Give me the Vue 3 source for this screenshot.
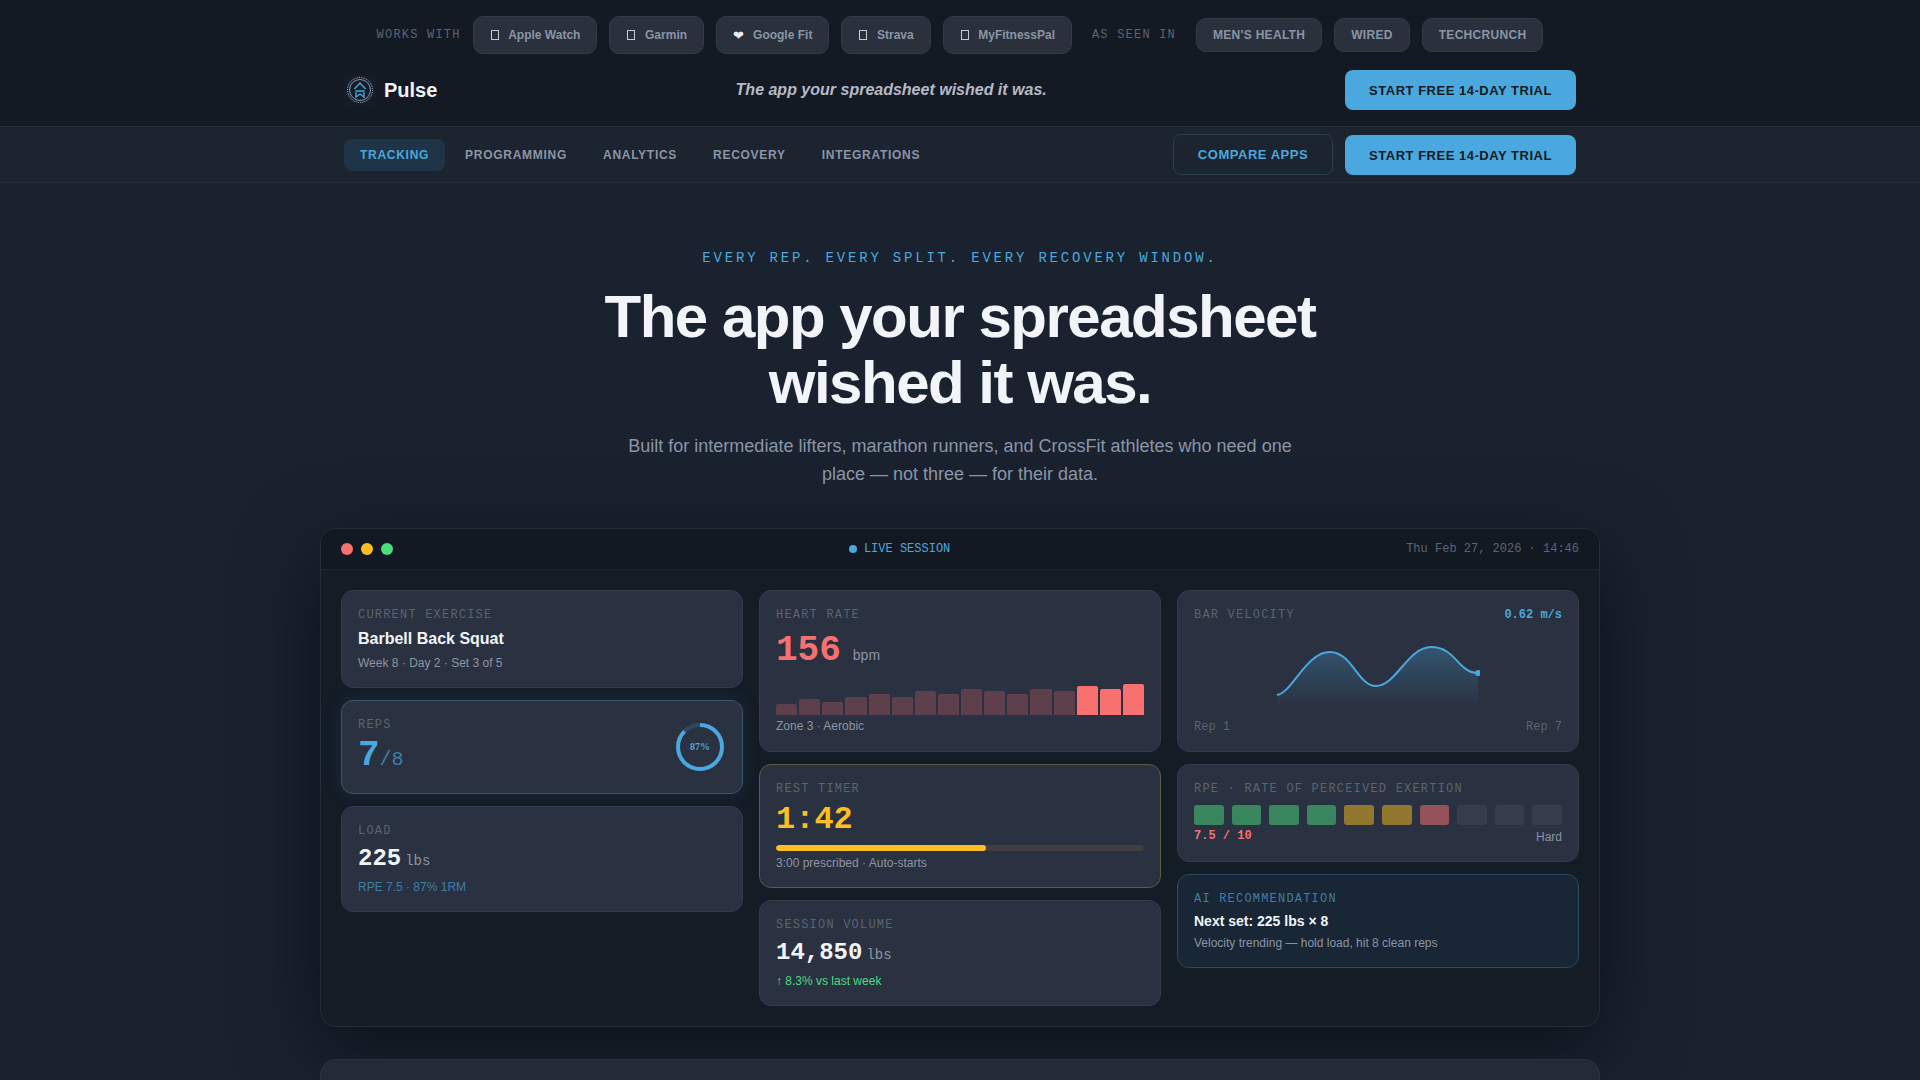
<script setup>
const chips = [
  { t: 'Apple Watch' },
  { t: 'Garmin' },
  { t: 'Google Fit', heart: true },
  { t: 'Strava' },
  { t: 'MyFitnessPal' }
]
const press = ["MEN'S HEALTH", 'WIRED', 'TECHCRUNCH']
const nav = ['TRACKING', 'PROGRAMMING', 'ANALYTICS', 'RECOVERY', 'INTEGRATIONS']
const hr = [11, 16, 13, 18, 21, 18, 24, 21, 26, 24, 21, 26, 24, 29, 26, 31]
const rpe = ['g', 'g', 'g', 'g', 'y', 'y', 'r', 'e', 'e', 'e']
</script>

<template>
  <div class="page">
    <header class="top">
      <div class="wrap">
        <div class="strip">
          <span class="strip-label">WORKS WITH</span>
          <span v-for="c in chips" :key="c.t" class="chip">
            <span v-if="c.heart" class="chip-heart">❤</span>
            <span v-else class="chip-box"><i></i></span>
            {{ c.t }}
          </span>
          <span class="strip-label seen">AS SEEN IN</span>
          <span v-for="p in press" :key="p" class="chip press">{{ p }}</span>
        </div>
        <div class="brandrow">
          <div class="brand">
            <span class="logo">
              <svg width="32" height="32" viewBox="0 0 32 32" fill="none">
                <circle cx="16" cy="16" r="12.500" stroke="#d5dae1" stroke-width="1" stroke-dasharray="1 1.300" />
                <circle cx="16" cy="16" r="10.500" stroke="#7f9db3" stroke-width="1" />
                <path d="M10.500 15 16 9 21.500 15M11.500 17h9M12 18v5l4-3 4 3v-5" stroke="#4aa8de" stroke-width="1.400" />
              </svg>
            </span>
            <span class="brand-name">Pulse</span>
          </div>
          <div class="tagline">The app your spreadsheet wished it was.</div>
          <button class="cta">START FREE 14-DAY TRIAL</button>
        </div>
      </div>
    </header>

    <nav class="nav">
      <div class="wrap navrow">
        <div class="links">
          <a v-for="(n, i) in nav" :key="n" class="link" :class="{ on: i === 0 }">{{ n }}</a>
        </div>
        <div class="nav-actions">
          <button class="ghost">COMPARE APPS</button>
          <button class="cta">START FREE 14-DAY TRIAL</button>
        </div>
      </div>
    </nav>

    <section class="hero">
      <div class="eyebrow">EVERY REP. EVERY SPLIT. EVERY RECOVERY WINDOW.</div>
      <h1>The app your spreadsheet<br />wished it was.</h1>
      <p class="sub">Built for intermediate lifters, marathon runners, and CrossFit athletes who need one place — not three — for their data.</p>
    </section>

    <section class="window">
      <div class="titlebar">
        <div class="dots"><i class="d r"></i><i class="d y"></i><i class="d g"></i></div>
        <div class="live"><i class="live-dot"></i>LIVE SESSION</div>
        <div class="date">Thu Feb 27, 2026 · 14:46</div>
      </div>
      <div class="grid">
        <div class="col">
          <div class="card c1">
            <div class="lbl">CURRENT EXERCISE</div>
            <div class="ex">Barbell Back Squat</div>
            <div class="meta">Week 8 · Day 2 · Set 3 of 5</div>
          </div>
          <div class="card c2 reps">
            <div>
              <div class="lbl">REPS</div>
              <div class="repval"><span class="seven">7</span><span class="of">/8</span></div>
            </div>
            <svg class="ring" width="52" height="52" viewBox="0 0 52 52">
              <circle cx="26" cy="26" r="22" fill="none" stroke="#2f4a60" stroke-width="4" />
              <circle cx="26" cy="26" r="22" fill="none" stroke="#4aa8de" stroke-width="4" stroke-dasharray="120.300 138.200" transform="rotate(-90 26 26)" />
              <text x="26" y="29" text-anchor="middle" class="ringtxt">87%</text>
            </svg>
          </div>
          <div class="card c3">
            <div class="lbl">LOAD</div>
            <div class="big24">225<span class="unit">lbs</span></div>
            <div class="meta blue">RPE 7.5 · 87% 1RM</div>
          </div>
        </div>

        <div class="col">
          <div class="card c4">
            <div class="lbl">HEART RATE</div>
            <div class="hr"><span class="hrv">156</span><span class="bpm">bpm</span></div>
            <div class="bars">
              <i v-for="(h, i) in hr" :key="i" class="bar" :class="{ hot: i > 12 }" :style="{ height: h + 'px' }"></i>
            </div>
            <div class="meta">Zone 3 · Aerobic</div>
          </div>
          <div class="card c5 rest">
            <div class="lbl">REST TIMER</div>
            <div class="timer">1:42</div>
            <div class="track"><div class="fill" :style="{ width: '57%' }"></div></div>
            <div class="meta">3:00 prescribed · Auto-starts</div>
          </div>
          <div class="card c3">
            <div class="lbl">SESSION VOLUME</div>
            <div class="big24">14,850<span class="unit">lbs</span></div>
            <div class="meta green">↑ 8.3% vs last week</div>
          </div>
        </div>

        <div class="col">
          <div class="card c4">
            <div class="vhead"><span class="lbl">BAR VELOCITY</span><span class="vval">0.62 m/s</span></div>
            <svg class="chart" width="204" height="64" viewBox="0 0 204 64">
              <defs>
                <linearGradient id="vg" x1="0" y1="0" x2="0" y2="1">
                  <stop offset="0" stop-color="#4aa8de" stop-opacity=".3" />
                  <stop offset="1" stop-color="#4aa8de" stop-opacity="0" />
                </linearGradient>
              </defs>
              <path d="M1 50C16 48 30 7 54 7C76 7 82 41 100 41C120 41 132 2 155 2C180 2 182 28 202 28V64H1Z" fill="url(#vg)" />
              <path d="M1 50C16 48 30 7 54 7C76 7 82 41 100 41C120 41 132 2 155 2C180 2 182 28 202 28" fill="none" stroke="#4aa8de" stroke-width="2" />
              <circle cx="202" cy="28" r="3" fill="#4aa8de" />
            </svg>
            <div class="vfoot"><span>Rep 1</span><span>Rep 7</span></div>
          </div>
          <div class="card c1">
            <div class="lbl">RPE · RATE OF PERCEIVED EXERTION</div>
            <div class="rpe"><i v-for="(r, i) in rpe" :key="i" class="cell" :class="r"></i></div>
            <div class="rpefoot"><span class="rpev">7.5 / 10</span><span class="meta">Hard</span></div>
          </div>
          <div class="card c2 ai">
            <div class="lbl ailbl">AI RECOMMENDATION</div>
            <div class="next">Next set: 225 lbs × 8</div>
            <div class="meta">Velocity trending — hold load, hit 8 clean reps</div>
          </div>
        </div>
      </div>
    </section>

    <section class="below"></section>
  </div>
</template>

<style>
html, body { margin: 0; background: #1a2230; }
body { overflow-x: hidden; }
</style>

<style scoped>
.page {
  min-height: 1080px;
  background: #1a2230;
  font-family: "Liberation Sans", Arial, sans-serif;
  color: #e8edf5;
}
button { font-family: inherit; cursor: pointer; }
.wrap { width: 1232px; margin: 0 auto; }

.top { height: 126px; background: #141a24; }
.strip { display: flex; align-items: center; justify-content: center; gap: 12px; height: 70px; }
.strip-label { font: 12px "Liberation Mono", monospace; letter-spacing: 1.200px; color: #5b6472; }
.seen { margin: 0 8px; }
.chip {
  display: inline-flex; align-items: center; gap: 8px;
  height: 38px; padding: 0 16px; box-sizing: border-box;
  background: #2a303c; border: 1px solid #343b48; border-radius: 10px;
  font-size: 12px; font-weight: 700; color: #8b95a5;
}
.press { height: 34px; letter-spacing: .3px; }
.chip-box { width: 10.600px; display: block; }
.chip-box i { display: block; box-sizing: border-box; width: 8px; height: 10px; margin-left: 1px; border: 1px solid #c4cad3; }
.chip-heart { width: 12px; font-size: 13px; font-weight: 400; color: #e8edf5; }

.brandrow { display: flex; align-items: center; justify-content: space-between; height: 40px; }
.brand { display: flex; align-items: center; gap: 8px; }
.logo { width: 32px; height: 32px; display: block; background: #161d28; border-radius: 4px; }
.logo svg { display: block; }
.brand-name { font-size: 20px; font-weight: 700; color: #f1f4f9; }
.tagline { font-size: 16px; font-weight: 700; font-style: italic; color: #b4bac4; }

.cta {
  height: 40px; width: 231px; padding: 0; border: 0; border-radius: 8px;
  background: #4aa8de; color: #141a24;
  font-size: 13px; font-weight: 700; letter-spacing: .52px;
}
.nav { height: 57px; background: #1c2430; border-top: 1px solid #232b38; border-bottom: 1px solid #232b38; box-sizing: border-box; }
.navrow { display: flex; align-items: center; justify-content: space-between; height: 55px; }
.links { display: flex; align-items: center; gap: 4px; }
.link {
  display: block; padding: 0 16px; height: 32px; line-height: 32px;
  font-size: 12px; font-weight: 700; letter-spacing: .72px; color: #8b95a5; border-radius: 8px;
}
.link.on { background: #1f3446; color: #4aa8de; }
.nav-actions { display: flex; align-items: flex-end; gap: 12px; }
.ghost {
  height: 41px; width: 160px; padding: 0; background: transparent;
  border: 1px solid #2c3d4e; border-radius: 8px;
  font-size: 13px; font-weight: 700; letter-spacing: .52px; color: #4aa8de;
}

.hero { text-align: center; padding-top: 67px; }
.eyebrow { font: 14px/16px "Liberation Mono", monospace; letter-spacing: 2.800px; color: #4aa8de; }
h1 { margin: 18px 0 0; font-size: 60px; line-height: 66px; font-weight: 700; letter-spacing: -1.500px; color: #f1f4f9; }
.sub { margin: 16px auto 0; width: 680px; font-size: 18px; line-height: 28px; color: #8b95a5; }

.window {
  width: 1280px; height: 499px; box-sizing: border-box; margin: 40px auto 0;
  background: #141c26; border: 1px solid #252d3a; border-radius: 16px;
  box-shadow: 0 24px 80px rgba(0, 0, 0, .5);
  overflow: hidden;
}
.titlebar { display: flex; align-items: center; justify-content: space-between; height: 40px; padding: 0 20px; border-bottom: 1px solid #1f2733; background: #131922; }
.dots { display: flex; gap: 8px; }
.d { width: 12px; height: 12px; border-radius: 50%; display: block; }
.d.r { background: #f87171; } .d.y { background: #fbbf24; } .d.g { background: #4ade80; }
.live { display: flex; align-items: center; gap: 7px; font: 12px "Liberation Mono", monospace; color: #4aa8de; }
.live-dot { width: 8px; height: 8px; border-radius: 50%; background: #4aa8de; display: block; }
.date { font: 12px "Liberation Mono", monospace; color: #5b6472; }

.grid { display: grid; grid-template-columns: repeat(3, 402px); gap: 16px; padding: 20px; }
.col { display: flex; flex-direction: column; gap: 12px; }
.card { box-sizing: border-box; background: #2a3140; border: 1px solid #343b4a; border-radius: 12px; padding: 17px 16px 16px; }
.c1 { height: 98px; } .c2 { height: 94px; } .c3 { height: 106px; } .c4 { height: 162px; } .c5 { height: 124px; }
.lbl { font: 12px/14px "Liberation Mono", monospace; letter-spacing: 1.200px; color: #5b6472; }
.ex { font-size: 16px; line-height: 20px; font-weight: 700; color: #f1f4f9; margin-top: 7px; }
.meta { font-size: 12px; line-height: 16px; color: #8b95a5; margin-top: 6px; }
.blue { color: #3f7ea8; } .green { color: #4ade80; }
.c3 .meta { margin-top: 3px; }
.reps { display: flex; justify-content: space-between; align-items: center; border-color: #375770; box-shadow: 0 0 20px rgba(74, 168, 222, .1); padding: 0 16px; }
.reps > div { align-self: flex-start; padding-top: 17px; }
.repval { font-family: "Liberation Mono", monospace; line-height: 36px; margin-top: 6px; }
.seven { font-size: 36px; font-weight: 700; color: #4aa8de; }
.of { font-size: 20px; color: #3f7ea8; }
.ringtxt { font-family: "Liberation Serif", serif; font-size: 10px; font-weight: 700; fill: #4aa8de; }
.big24 { font: 700 24px/30px "Liberation Mono", monospace; color: #f1f4f9; margin-top: 6px; }
.unit { font-size: 14px; font-weight: 400; color: #8b95a5; margin-left: 4px; }

.hr { display: flex; align-items: baseline; margin-top: 7px; height: 44px; }
.hrv { font: 700 36px/44px "Liberation Mono", monospace; color: #f87171; }
.bpm { font-size: 14px; color: #8b95a5; margin-left: 12px; }
.bars { display: flex; align-items: flex-end; gap: 2px; height: 32px; margin-top: 10px; }
.bar { flex: 1; display: block; background: rgba(248, 113, 113, .25); border-radius: 2px 2px 0 0; }
.bar.hot { background: #f87171; }
.c4 .meta { margin-top: 3px; }

.rest { border-color: #5f5b3e; }
.timer { font: 700 32px/40px "Liberation Mono", monospace; color: #fbbf24; margin-top: 4px; }
.track { height: 6px; border-radius: 3px; background: #403e3e; margin-top: 5px; overflow: hidden; }
.fill { height: 100%; background: #fbbf24; border-radius: 3px; }
.rest .meta { margin-top: 4px; }

.vhead { display: flex; justify-content: space-between; align-items: center; }
.vval { font: 700 12px/14px "Liberation Mono", monospace; color: #4aa8de; }
.chart { display: block; margin: 23px auto 0; }
.vfoot { display: flex; justify-content: space-between; font: 12px/16px "Liberation Mono", monospace; color: #5b6472; margin-top: 10px; }

.rpe { display: flex; gap: 8px; margin-top: 9px; }
.cell { flex: 1; height: 20px; border-radius: 3px; display: block; }
.cell.g { background: #3a875f; } .cell.y { background: #927731; } .cell.r { background: #95525b; } .cell.e { background: #363c4a; }
.rpefoot { display: flex; justify-content: space-between; align-items: center; margin-top: 1px; }
.rpefoot .meta { margin-top: 3px; }
.rpev { font: 700 12px/16px "Liberation Mono", monospace; color: #f87171; }

.ai { background: #182635; border-color: #2a4a60; }
.ailbl { color: #3f7ea8; }
.next { font-size: 14px; line-height: 18px; font-weight: 700; color: #f1f4f9; margin-top: 6px; }
.ai .meta { margin-top: 5px; }

.below { width: 1280px; height: 240px; box-sizing: border-box; margin: 32px auto 0; background: #232a38; border: 1px solid #2c3442; border-radius: 16px; }
</style>
